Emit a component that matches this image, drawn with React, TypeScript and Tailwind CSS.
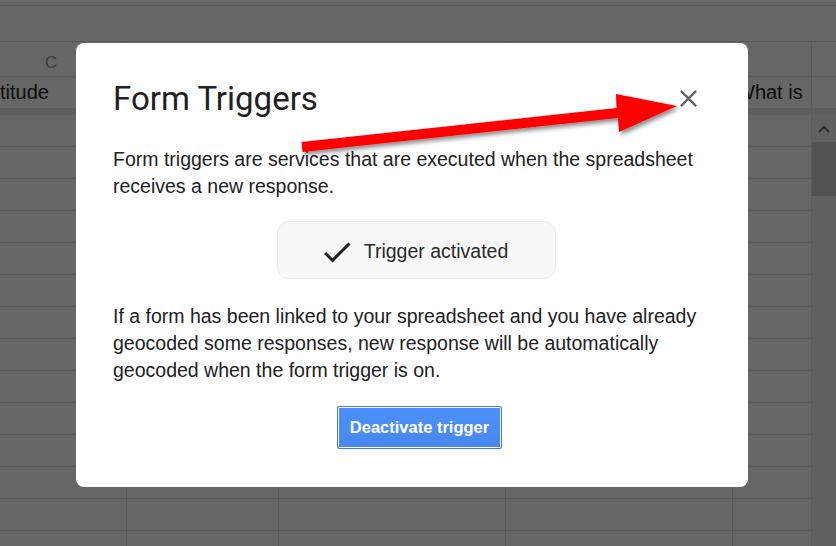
const COLS = [127, 152, 227, 227, 79];
const ROWS = Array.from({ length: 14 }, (_, i) => i);

function GridRow({ height, children }: { height: string; children?: React.ReactNode[] }) {
  return (
    <div className={`flex border-b border-[#5a5a5a] ${height}`}>
      {COLS.map((w, i) => (
        <div
          key={i}
          className="shrink-0 overflow-hidden border-r border-[#5a5a5a]"
          style={{ width: w }}
        >
          {children?.[i]}
        </div>
      ))}
    </div>
  );
}

function Sheet() {
  return (
    <div className="flex flex-col font-['Liberation_Sans',Arial,sans-serif]">
      <div className="h-[6px] border-b border-[#5a5a5a]" />
      <div className="h-[36px] border-b border-[#5a5a5a]" />
      <div className="flex">
        <div className="flex w-[812px] flex-col">
          <GridRow height="h-[35px]">
            {[
              <div key="c" className="pl-[45px] pt-[8px] text-[17px] text-[#3c3c3c]">C</div>,
            ]}
          </GridRow>
          <div className="flex h-[31px]">
            {COLS.map((w, i) => (
              <div
                key={i}
                className="shrink-0 overflow-hidden whitespace-nowrap border-r border-[#5a5a5a] text-[20px] leading-[31px] text-[#0d0d0d]"
                style={{ width: w }}
              >
                {i === 0 && <span>titude</span>}
                {i === 4 && <span className="pl-[3px]">What is</span>}
              </div>
            ))}
          </div>
          <div className="h-[7px] bg-[#5d5e60]" />
          {ROWS.map((r) => (
            <GridRow key={r} height="h-[32px]" />
          ))}
        </div>
        <div className="flex w-[24px] flex-col">
          <div className="h-[35px] border-b border-[#5a5a5a]" />
          <div className="h-[31px]" />
          <div className="h-[7px] bg-[#5d5e60]" />
          <div className="flex flex-1 flex-col bg-[#616161]">
            <div className="flex h-[27px] items-center justify-center">
              <svg width="12" height="8" viewBox="0 0 12 8">
                <path d="M1 7 L6 2 L11 7" fill="none" stroke="#2e2e2e" strokeWidth="2.2" />
              </svg>
            </div>
            <div className="h-[54px] bg-[#525252]" />
          </div>
        </div>
      </div>
    </div>
  );
}

function Arrow() {
  return (
    <svg
      className="pointer-events-none absolute left-0 top-0"
      width="836"
      height="546"
      viewBox="0 0 836 546"
    >
      <defs>
        <filter id="sh" x="-10%" y="-50%" width="120%" height="200%">
          <feDropShadow dx="2" dy="3" stdDeviation="2" floodColor="#000" floodOpacity="0.45" />
        </filter>
      </defs>
      <polygon
        points="301.5,142 616.5,108 616,94 677,106 619,132 618,118 302.5,152"
        fill="#ff0000"
        filter="url(#sh)"
      />
    </svg>
  );
}

export default function App() {
  return (
    <div className="relative h-[546px] w-[836px] overflow-hidden bg-[#666666]">
      <Sheet />

      <div className="absolute left-[76px] top-[43px] flex h-[444px] w-[672px] flex-col rounded-[8px] bg-white pl-[37px] pr-[28px] pt-[36px] font-['Liberation_Sans',Arial,sans-serif] text-[#202124]">
        <div className="flex items-start justify-between">
          <h2 className="font-['Roboto',sans-serif] text-[33px] font-normal leading-[40px] text-[#202124]">
            Form Triggers
          </h2>
          <button className="mr-[17px] mt-[5px] text-[#666]">
            <svg width="29" height="29" viewBox="0 0 24 24" fill="currentColor">
              <path d="M19 6.41L17.59 5 12 10.59 6.41 5 5 6.41 10.59 12 5 17.59 6.41 19 12 13.41 17.59 19 19 17.59 13.41 12z" />
            </svg>
          </button>
        </div>

        <p className="mt-[27px] text-[19.5px] leading-[27px]">
          Form triggers are services that are executed when the spreadsheet receives a new response.
        </p>

        <div className="mt-[21px] flex justify-center">
          <div className="flex h-[58px] w-[279px] items-center justify-center gap-[9px] rounded-[12px] border border-[#ececec] bg-[#f8f8f8] pr-[6px] pt-[3px]">
            <svg width="36" height="36" viewBox="0 0 24 24" fill="#222">
              <path d="M9 16.17L4.83 12l-1.42 1.41L9 19 21 7l-1.41-1.41z" />
            </svg>
            <span className="text-[19.5px] text-[#2a2a2a]">Trigger activated</span>
          </div>
        </div>

        <p className="mt-[24px] text-[19.5px] leading-[27px]">
          If a form has been linked to your spreadsheet and you have already geocoded some
          responses, new response will be automatically geocoded when the form trigger is on.
        </p>

        <div className="mt-[22px] flex justify-center">
          <button className="ml-[6px] h-[43px] w-[165px] rounded-[2px] border border-[#3b7ded] bg-gradient-to-b from-[#4d90fe] to-[#4787ed] text-[16.5px] font-bold text-white shadow-[inset_0_0_0_1px_#ffffff]">
            Deactivate trigger
          </button>
        </div>
      </div>

      <Arrow />
    </div>
  );
}
